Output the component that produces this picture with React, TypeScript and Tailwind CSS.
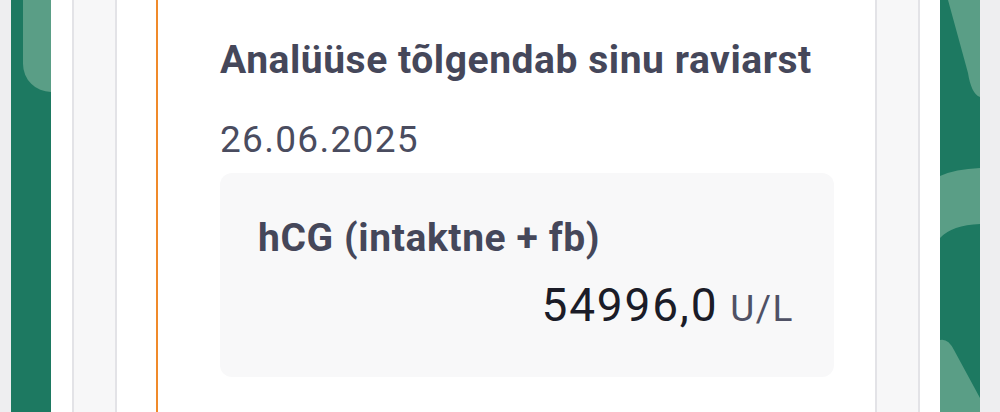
const font = { fontFamily: 'Roboto, "Noto Sans", sans-serif' };

function GreenLeft() {
  return (
    <div className="w-[40px] h-full bg-[#1d7961]">
      <svg width="40" height="412" viewBox="0 0 40 412" className="block">
        <path d="M12 0 L40 0 L40 92 A28 28 0 0 1 12 64 Z" fill="#5a9e86" />
      </svg>
    </div>
  );
}

function GreenRight() {
  return (
    <div className="w-[40px] h-full bg-[#1d7961]">
      <svg width="40" height="412" viewBox="0 0 40 412" className="block">
        <path d="M8 0 L40 0 L40 97 C34 95 30 86 28 73 Z" fill="#5a9e86" />
        <path d="M0 176 Q15 169 40 168 L40 224 Q12 225 0 238 Z" fill="#5a9e86" />
        <path d="M0 340 Q8 338 14 350 L40 398 L40 412 L0 412 Z" fill="#5a9e86" />
      </svg>
    </div>
  );
}

export default function App() {
  return (
    <div className="flex w-[1000px] h-[412px] overflow-hidden bg-[#eeeef0]" style={font}>
      <div className="w-[11px] shrink-0" />
      <GreenLeft />
      <div className="w-[21px] shrink-0 bg-white" />
      <div className="w-[45px] shrink-0 bg-[#f7f7f8] border-x-2 border-[#e3e3e7]" />
      <div className="w-[39px] shrink-0 bg-white" />

      <div className="flex-1 bg-white border-l-2 border-[#f08a2a] pl-[62px] pr-[41px] pt-[38px]">
        <h1 className="text-[39px] leading-[45px] font-bold text-[#45475a] tracking-[0.55px] whitespace-nowrap">
          Analüüse tõlgendab sinu raviarst
        </h1>
        <p className="mt-[35px] text-[37px] leading-[44px] text-[#4a4c5f] tracking-[1.3px]">26.06.2025</p>

        <div className="mt-[11px] h-[204px] rounded-xl bg-[#f8f8f9] pl-[38px] pr-[40px] pt-[42px]">
          <p className="text-[39px] leading-[46px] font-bold text-[#45475a] tracking-[0.6px] whitespace-nowrap">
            hCG (intaktne + fb)
          </p>
          <div className="mt-[18px] flex items-baseline justify-end gap-[12px]">
            <span className="text-[46px] leading-[52px] text-[#1b1c28] tracking-[1.8px]">54996,0</span>
            <span className="text-[37px] leading-[44px] text-[#4f5165] tracking-[1.5px]">U/L</span>
          </div>
        </div>
      </div>

      <div className="w-[45px] shrink-0 bg-[#f7f7f8] border-x-2 border-[#e3e3e7]" />
      <div className="w-[20px] shrink-0 bg-white" />
      <GreenRight />
      <div className="w-[20px] shrink-0" />
    </div>
  );
}
